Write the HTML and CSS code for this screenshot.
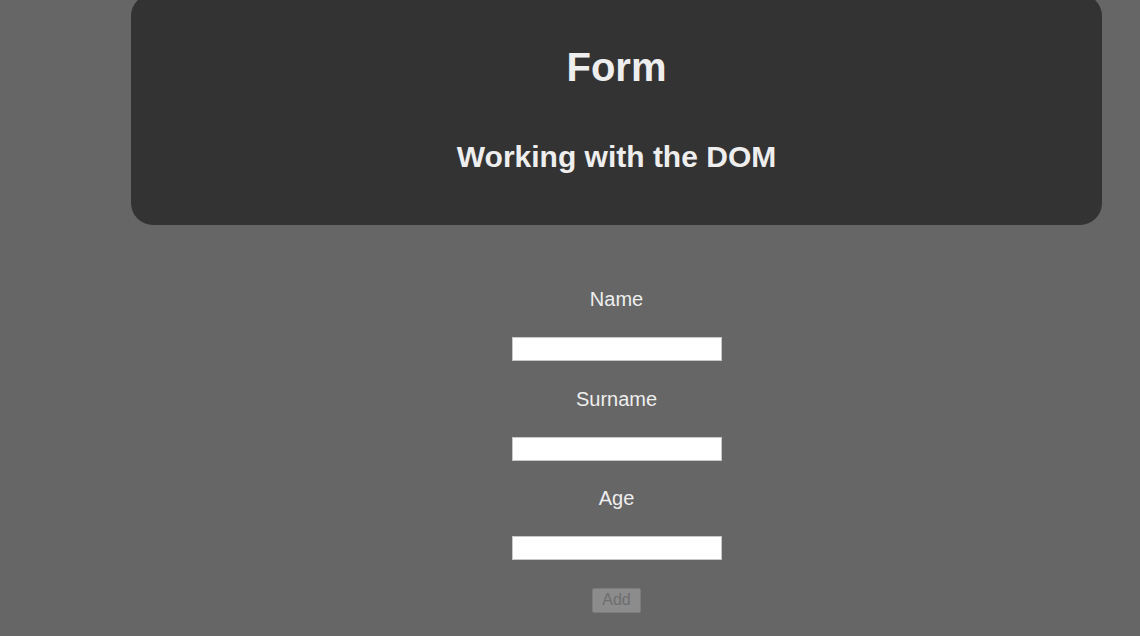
FILE: index.html
```html
<!DOCTYPE html>
<html lang="en">
<head>
<meta charset="utf-8">
<title>Form</title>
<link rel="stylesheet" href="styles.css">
</head>
<body>
<div class="page">
  <header class="header">
    <h1 class="title">Form</h1>
    <h2 class="subtitle">Working with the DOM</h2>
  </header>
  <form class="form">
    <div class="field">
      <label class="label" for="name">Name</label>
      <input class="input" id="name" type="text">
    </div>
    <div class="field">
      <label class="label" for="surname">Surname</label>
      <input class="input" id="surname" type="text">
    </div>
    <div class="field">
      <label class="label" for="age">Age</label>
      <input class="input" id="age" type="text">
    </div>
    <button class="btn" type="button" disabled>Add</button>
  </form>
</div>
</body>
</html>
```

FILE: styles.css
```css
html, body {
  margin: 0;
  padding: 0;
  background: #666666;
  overflow: hidden;
}
body {
  font-family: "Liberation Sans", Arial, sans-serif;
  color: #eeeeee;
}
.page {
  margin-left: 131px;
  width: 971px;
}
.header {
  margin-top: -6px;
  background: #333333;
  border-radius: 22px;
  padding: 50px 0 50px;
  text-align: center;
}
.title {
  margin: 0;
  font-size: 40px;
  line-height: 46px;
  font-weight: bold;
}
.subtitle {
  margin: 49px 0 0;
  font-size: 30px;
  line-height: 36px;
  font-weight: bold;
}
.form {
  margin-top: 62px;
  display: flex;
  flex-direction: column;
  align-items: center;
}
.field {
  display: flex;
  flex-direction: column;
  align-items: center;
  margin-bottom: 25.5px;
}
.label {
  font-size: 20px;
  line-height: 24px;
  margin-bottom: 26px;
}
.input {
  box-sizing: border-box;
  width: 210px;
  height: 24px;
  margin: 0;
  border: 1px solid #c8c8c8;
  background: #ffffff;
  padding: 0 4px;
}
.btn {
  box-sizing: border-box;
  margin-top: 2px;
  width: 49px;
  height: 25px;
  padding: 0;
  font-family: "Liberation Sans", Arial, sans-serif;
  font-size: 16px;
  color: #6e6e6e;
  background: #8c8c8c;
  border: 1px solid #7c7c7c;
  border-radius: 2px;
}
```
